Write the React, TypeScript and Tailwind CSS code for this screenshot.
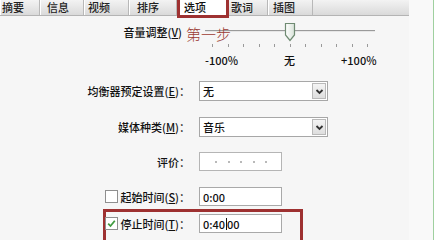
import React from "react";

const font = { fontFamily: '"Noto Sans CJK SC", "Noto Sans", sans-serif' };

const tabs = [
  { label: "摘要", w: "w-[40px]", pl: "pl-[2px]" },
  { label: "信息", w: "w-[44px]", pl: "pl-[7px]" },
  { label: "视频", w: "w-[45px]", pl: "pl-[4px]" },
  { label: "排序", w: "w-[48px]", pl: "pl-[8px]" },
];

const Chevron = () => (
  <svg width="9" height="7" viewBox="0 0 9 7" className="text-[#333]">
    <path d="M1.5 2 L4.5 5 L7.5 2" fill="none" stroke="currentColor" strokeWidth="1.8" />
  </svg>
);

const Select: React.FC<{ value: string }> = ({ value }) => (
  <div className="ml-[9px] flex h-[20px] w-[129px] items-center border border-[#a7a7a7] bg-white pl-[3px] pr-[1px]">
    <span className="flex-1 text-[11px] font-medium leading-[14px] text-[#111]">{value}</span>
    <div className="flex h-[16px] w-[14px] items-center justify-center border border-[#b9b9b9] bg-gradient-to-b from-[#f4f4f4] to-[#dedede]">
      <Chevron />
    </div>
  </div>
);

const Label: React.FC<{ children: React.ReactNode; w?: string }> = ({ children, w = "w-[190px]" }) => (
  <div className={`${w} flex shrink-0 items-center justify-end whitespace-nowrap text-[11px] font-medium leading-[14px] text-[#111]`}>
    {children}
  </div>
);

const Box: React.FC<{ checked?: boolean }> = ({ checked }) => (
  <div className="mr-[2px] flex h-[13px] w-[13px] shrink-0 items-center justify-center border border-[#8f8f8f] bg-white">
    {checked && (
      <svg width="9" height="9" viewBox="0 0 9 9">
        <path d="M1.2 4.6 L3.5 7 L7.8 1.8" fill="none" stroke="#3f9b3f" strokeWidth="1.8" />
      </svg>
    )}
  </div>
);

export default function App() {
  const ticks = Array.from({ length: 11 });
  return (
    <div className="flex h-[240px] w-[435px] overflow-hidden bg-[#f6f6f6]" style={font}>
      <div className="flex w-[409px] shrink-0 flex-col">
        {/* tab strip */}
        <div className="flex h-[16px] items-stretch border-b border-[#b4b4b4] bg-gradient-to-b from-[#f3f3f3] to-[#dadada]">
          {tabs.map((t) => (
            <div
              key={t.label}
              className={`${t.w} ${t.pl} border-r border-[#b8b8b8] text-[11px] font-medium leading-[15px] text-[#222] shadow-[inset_1px_0_0_#ffffff]`}>
              {t.label}
            </div>
          ))}
          <div className="relative z-10 h-[18px] w-[52px] border-x-[3px] border-b-[3px] border-[#9e3131] bg-white pl-[4px] text-[11px] font-medium leading-[14px] text-[#111]">
            选项
          </div>
          <div className="w-[39px] border-r border-[#b8b8b8] pl-[2px] text-[11px] font-medium leading-[15px] text-[#222]">
            歌词
          </div>
          <div className="w-[45px] border-r border-[#b8b8b8] pl-[5px] text-[11px] font-medium leading-[15px] text-[#222] shadow-[inset_1px_0_0_#ffffff]">
            插图
          </div>
        </div>

        {/* volume */}
        <div className="relative mt-[6px] flex">
          <Label w="w-[182px] h-[20px]">
            音量调整(<u>V</u>)
          </Label>
          <div className="ml-[23px] flex w-[170px] flex-col">
            <div className="relative h-[20px]">
              <div className="absolute left-0 right-0 top-[8px] h-[2px] border-t border-[#9a9a9a] bg-[#e6e6e6]" />
              <svg
                width="12"
                height="20"
                viewBox="0 0 12 20"
                className="absolute left-[79px] top-0">
                <defs>
                  <linearGradient id="th" x1="0" y1="0" x2="1" y2="0">
                    <stop offset="0" stopColor="#ffffff" />
                    <stop offset="1" stopColor="#d8e2d8" />
                  </linearGradient>
                </defs>
                <path
                  d="M1.5 1.5 H10.5 V13 L6 18.5 L1.5 13 Z"
                  fill="url(#th)"
                  stroke="#6f8a72"
                  strokeWidth="1.2"
                />
              </svg>
            </div>
            <div className="mt-[2px] flex h-[4px] justify-between px-[7px]">
              {ticks.map((_, i) => (
                <div key={i} className="h-[3px] w-px bg-[#9a9a9a]" />
              ))}
            </div>
            <div className="mt-[5px] flex h-[14px] items-center text-[11px] font-medium leading-[14px] text-[#111]">
              <span className="w-[34px] text-right">-100%</span>
              <span className="ml-[46px] w-[12px]">无</span>
              <span className="ml-[46px]">+100%</span>
            </div>
          </div>
          {/* annotation */}
          <span className="absolute left-[186px] top-[3px] text-[15px] font-light leading-[18px] text-[#9b3a32]">
            第一步
          </span>
        </div>

        {/* equalizer */}
        <div className="mt-[14px] flex h-[20px] items-center">
          <Label>
            均衡器预定设置(<u>E</u>)：
          </Label>
          <Select value="无" />
        </div>

        {/* media kind */}
        <div className="mt-[16px] flex h-[20px] items-center">
          <Label>
            媒体种类(<u>M</u>)：
          </Label>
          <Select value="音乐" />
        </div>

        {/* rating */}
        <div className="mt-[15px] flex h-[19px] items-center">
          <Label>评价：</Label>
          <div className="ml-[9px] flex h-[19px] w-[83px] items-center gap-[10.5px] border border-[#b5b5b5] bg-white pl-[15px]">
            {[0, 1, 2, 3, 4].map((i) => (
              <div key={i} className="h-[2px] w-[2px] bg-[#b9b9b9]" />
            ))}
          </div>
        </div>

        {/* start time */}
        <div className="mt-[16px] flex h-[19px] items-center">
          <Label>
            <Box />
            起始时间(<u>S</u>)：
          </Label>
          <div className="ml-[9px] flex h-[19px] w-[83px] items-center border border-[#a9a9a9] bg-white pl-[3px] text-[11px] font-medium leading-[14px] text-[#111]">
            0:00
          </div>
        </div>

        {/* stop time, boxed */}
        <div className="ml-[103px] mt-[3px] flex h-[40px] w-[200px] items-start border-x-[3px] border-t-[3px] border-[#9e3131] pt-[2px]">
          <div className="flex h-[19px] items-center">
            <Label w="w-[84px]">
              <Box checked />
              停止时间(<u>T</u>)：
            </Label>
            <div className="ml-[9px] flex h-[19px] w-[83px] items-center border border-[#a9a9a9] bg-white pl-[3px] text-[11px] font-medium leading-[14px] text-[#111]">
              0:40
              <span className="mx-[0.5px] h-[12px] w-px bg-[#111]" />
              00
            </div>
          </div>
        </div>
      </div>
      <div className="w-[24px] shrink-0 bg-[#f9f9f9]" />
      <div className="w-px shrink-0 bg-[#9fd09f]" />
      <div className="flex-1 bg-white" />
    </div>
  );
}
